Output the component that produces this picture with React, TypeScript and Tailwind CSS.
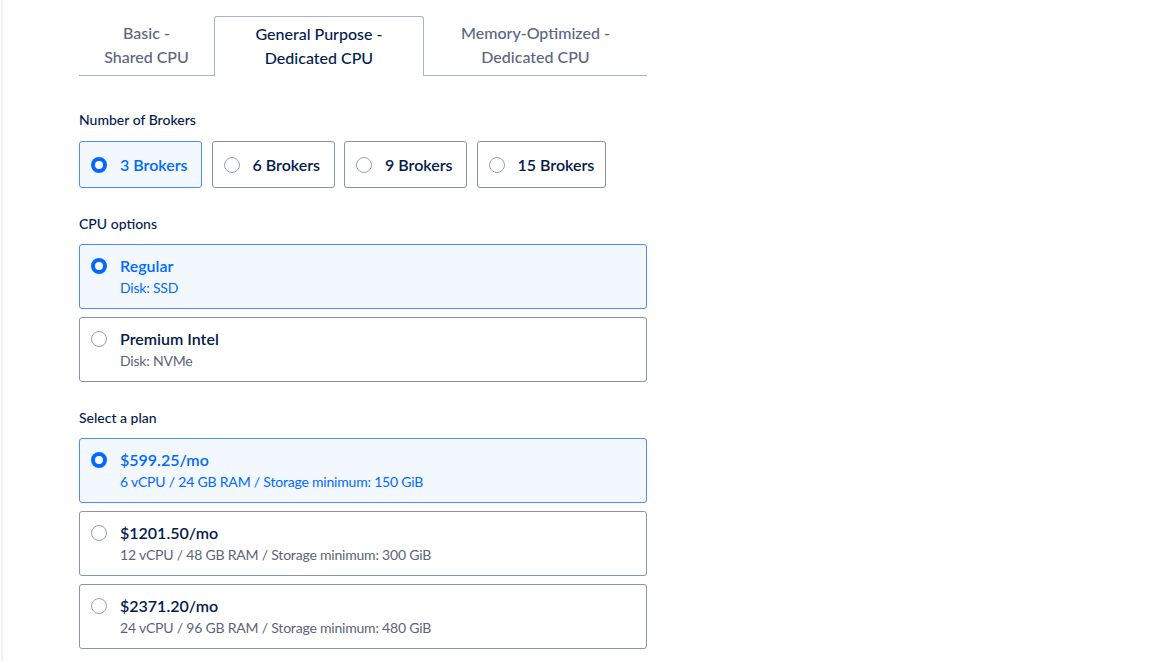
import { useState } from "react";

const tabs = [
  { id: "basic", top: "Basic -", bottom: "Shared CPU", width: "w-[135px]" },
  { id: "general", top: "General Purpose -", bottom: "Dedicated CPU", width: "w-[210px]" },
  { id: "memory", top: "Memory-Optimized -", bottom: "Dedicated CPU", width: "w-[223px]" },
];

const brokers = [
  { n: 3, width: "w-[123px]" },
  { n: 6, width: "w-[123px]" },
  { n: 9, width: "w-[123px]" },
  { n: 15, width: "w-[129px]" },
];

const cpuOptions = [
  { id: "regular", title: "Regular", sub: "Disk: SSD" },
  { id: "premium", title: "Premium Intel", sub: "Disk: NVMe" },
];

const plans = [
  { id: "p1", title: "$599.25/mo", sub: "6 vCPU / 24 GB RAM / Storage minimum: 150 GiB" },
  { id: "p2", title: "$1201.50/mo", sub: "12 vCPU / 48 GB RAM / Storage minimum: 300 GiB" },
  { id: "p3", title: "$2371.20/mo", sub: "24 vCPU / 96 GB RAM / Storage minimum: 480 GiB" },
];

function Radio({ checked }: { checked: boolean }) {
  return checked ? (
    <span className="block w-4 h-4 shrink-0 rounded-full border-[4px] border-[#0069ff] bg-white" />
  ) : (
    <span className="block w-4 h-4 shrink-0 rounded-full border-[1.5px] border-[#99a1b3] bg-white" />
  );
}

function OptionCard({
  title,
  sub,
  checked,
  onClick,
}: {
  title: string;
  sub: string;
  checked: boolean;
  onClick: () => void;
}) {
  return (
    <button
      onClick={onClick}
      className={`w-full h-[65px] flex items-start gap-[13px] pl-[11px] pt-[13px] rounded-[3px] border text-left ${
        checked ? "border-[#4d8cf7] bg-[#f3f8ff]" : "border-[#8a93a6] bg-white"
      }`}
    >
      <Radio checked={checked} />
      <div className="-mt-[4px]">
        <div
          className={`text-[16px] leading-6 font-semibold ${
            checked ? "text-[#0069ff]" : "text-[#031b4e]"
          }`}
        >
          {title}
        </div>
        <div
          className={`text-[14px] leading-5 tracking-[-0.2px] ${
            checked ? "text-[#0069ff]" : "text-[#5b6478]"
          }`}
        >
          {sub}
        </div>
      </div>
    </button>
  );
}

export default function App() {
  const [tab, setTab] = useState("general");
  const [broker, setBroker] = useState(3);
  const [cpu, setCpu] = useState("regular");
  const [plan, setPlan] = useState("p1");

  return (
    <div className="min-h-screen bg-white pl-px font-['Lato',sans-serif]">
      <div className="min-h-screen border-l-2 border-[#eef1f1]">
        <div className="ml-[76px] pt-4 w-[568px]">
          {/* tabs */}
          <div className="flex">
            {tabs.map((t) =>
              t.id === tab ? (
                <button
                  key={t.id}
                  onClick={() => setTab(t.id)}
                  className={`${t.width} h-[60px] pb-[2px] flex flex-col items-center justify-center border-t border-x border-[#a9b2c6] rounded-t-[3px] text-[16px] leading-6 font-medium text-[#031b4e]`}
                >
                  <span>{t.top}</span>
                  <span>{t.bottom}</span>
                </button>
              ) : (
                <button
                  key={t.id}
                  onClick={() => setTab(t.id)}
                  className={`${t.width} h-[60px] pb-[2px] flex flex-col items-center justify-center border-b border-[#a9b2c6] text-[16px] leading-6 font-medium text-[#5b6582]`}
                >
                  <span>{t.top}</span>
                  <span>{t.bottom}</span>
                </button>
              )
            )}
          </div>

          <div className="mt-[34px] text-[14px] leading-5 font-medium text-[#031b4e]">
            Number of Brokers
          </div>
          <div className="mt-[11px] flex gap-[9.5px]">
            {brokers.map((b) => {
              const checked = b.n === broker;
              return (
                <button
                  key={b.n}
                  onClick={() => setBroker(b.n)}
                  className={`${b.width} h-[47px] flex items-center gap-[13px] pl-[11px] rounded-[3px] border text-[16px] font-semibold ${
                    checked
                      ? "border-[#4d8cf7] bg-[#f3f8ff] text-[#0069ff]"
                      : "border-[#8a93a6] bg-white text-[#031b4e]"
                  }`}
                >
                  <Radio checked={checked} />
                  <span>{b.n} Brokers</span>
                </button>
              );
            })}
          </div>

          <div className="mt-[26px] text-[14px] leading-5 font-medium text-[#031b4e]">
            CPU options
          </div>
          <div className="mt-[10px] flex flex-col gap-2">
            {cpuOptions.map((c) => (
              <OptionCard
                key={c.id}
                title={c.title}
                sub={c.sub}
                checked={cpu === c.id}
                onClick={() => setCpu(c.id)}
              />
            ))}
          </div>

          <div className="mt-[26px] text-[14px] leading-5 font-medium text-[#031b4e]">
            Select a plan
          </div>
          <div className="mt-[10px] flex flex-col gap-2">
            {plans.map((p) => (
              <OptionCard
                key={p.id}
                title={p.title}
                sub={p.sub}
                checked={plan === p.id}
                onClick={() => setPlan(p.id)}
              />
            ))}
          </div>
        </div>
      </div>
    </div>
  );
}
